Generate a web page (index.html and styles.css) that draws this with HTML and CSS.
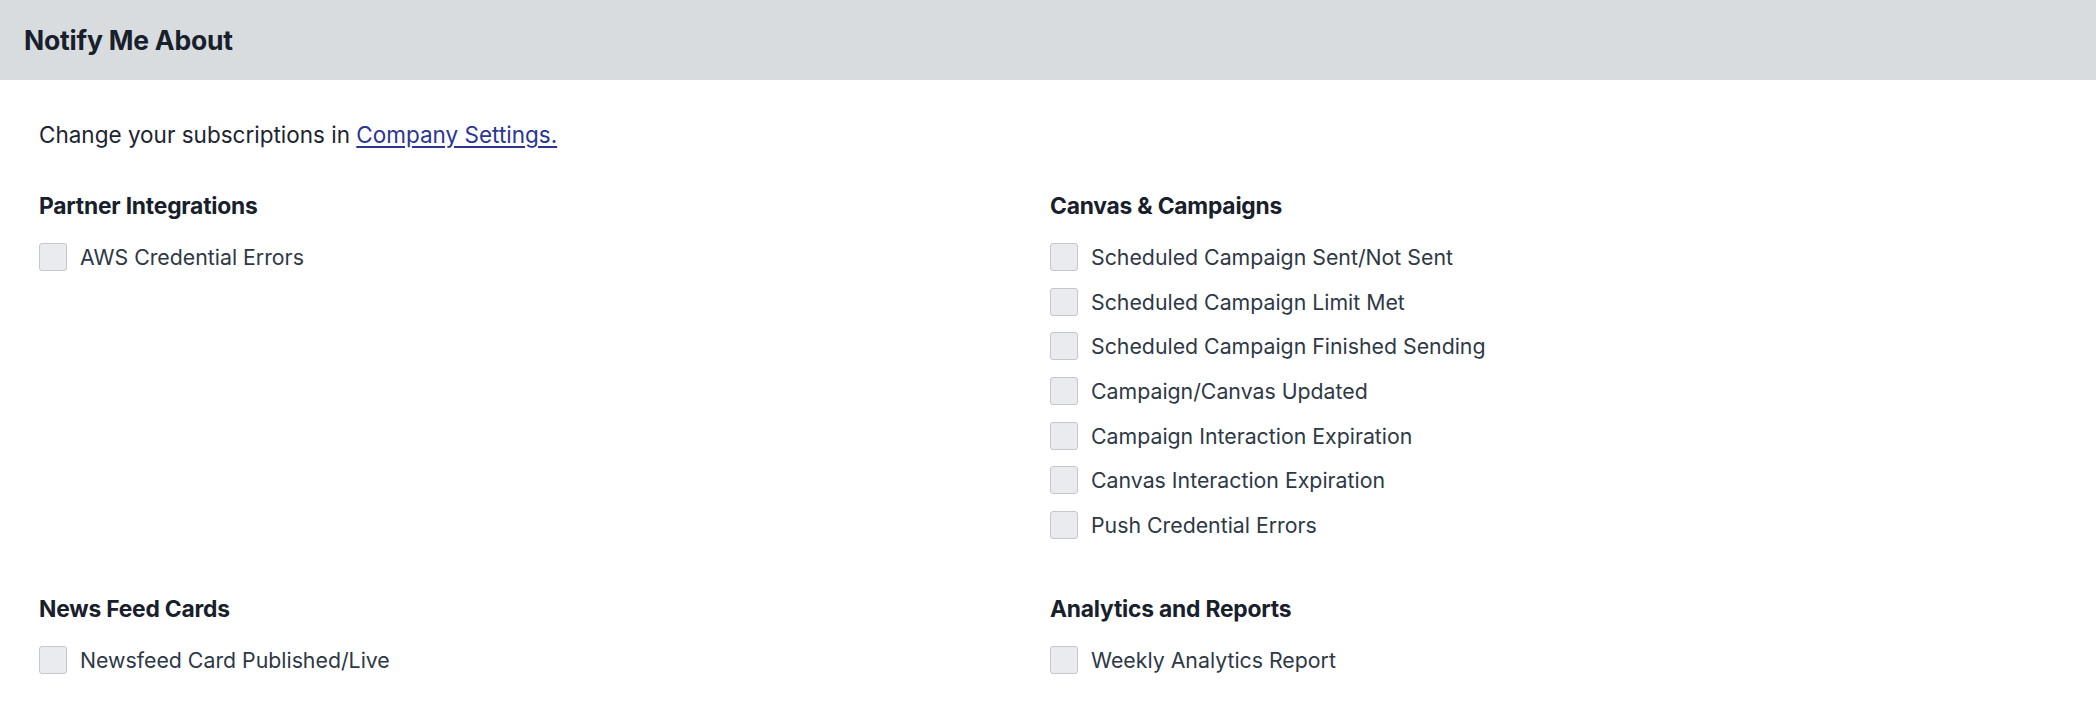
FILE: index.html
```html
<!DOCTYPE html>
<html>
<head>
<meta charset="utf-8">
<link rel="stylesheet" href="styles.css">
</head>
<body>
<div class="header"><h1 class="title">Notify Me About</h1></div>
<div class="content">
  <p class="intro">Change your subscriptions in <a href="#" class="link">Company Settings.</a></p>
  <div class="grid">
    <section class="group">
      <h3 class="group-title">Partner Integrations</h3>
      <label class="row"><span class="box"></span><span class="label">AWS Credential Errors</span></label>
    </section>
    <section class="group">
      <h3 class="group-title">Canvas &amp; Campaigns</h3>
      <label class="row"><span class="box"></span><span class="label">Scheduled Campaign Sent/Not Sent</span></label>
      <label class="row"><span class="box"></span><span class="label">Scheduled Campaign Limit Met</span></label>
      <label class="row"><span class="box"></span><span class="label">Scheduled Campaign Finished Sending</span></label>
      <label class="row"><span class="box"></span><span class="label">Campaign/Canvas Updated</span></label>
      <label class="row"><span class="box"></span><span class="label">Campaign Interaction Expiration</span></label>
      <label class="row"><span class="box"></span><span class="label">Canvas Interaction Expiration</span></label>
      <label class="row"><span class="box"></span><span class="label">Push Credential Errors</span></label>
    </section>
    <section class="group">
      <h3 class="group-title">News Feed Cards</h3>
      <label class="row"><span class="box"></span><span class="label">Newsfeed Card Published/Live</span></label>
    </section>
    <section class="group">
      <h3 class="group-title">Analytics and Reports</h3>
      <label class="row"><span class="box"></span><span class="label">Weekly Analytics Report</span></label>
    </section>
  </div>
</div>
</body>
</html>
```
FILE: styles.css
```css
html, body {
  margin: 0;
  padding: 0;
  background: #ffffff;
  font-family: "Inter", "Lato", sans-serif;
  color: #1c2430;
}
.header {
  height: 80px;
  background: #d9dcdf;
  display: flex;
  align-items: center;
  padding-left: 24px;
}
.title {
  margin: 0;
  font-size: 26.5px;
  font-weight: 700;
  letter-spacing: -0.2px;
  color: #18202b;
}
.content {
  padding: 40px 39px 0 39px;
}
.intro {
  margin: 0 0 42px 0;
  font-size: 22.5px;
  line-height: 30px;
  color: #1c2430;
}
.link {
  color: #2b3592;
  text-decoration: underline;
  text-underline-offset: 3px;
}
.grid {
  display: grid;
  grid-template-columns: 1fr 1fr;
  column-gap: 4px;
  row-gap: 47.5px;
}
.group {
  display: flex;
  flex-direction: column;
}
.group-title {
  margin: 0 0 14.5px 0;
  font-size: 22.8px;
  line-height: 28px;
  font-weight: 700;
  letter-spacing: -0.2px;
  color: #18202b;
}
.row {
  display: flex;
  align-items: center;
  height: 44.7px;
  gap: 13px;
}
.box {
  width: 26px;
  height: 26px;
  border: 1px solid #c3c8ce;
  border-radius: 3px;
  background: #e9ebee;
  flex: none;
}
.label {
  font-size: 21.3px;
  color: #2e3846;
}
```
